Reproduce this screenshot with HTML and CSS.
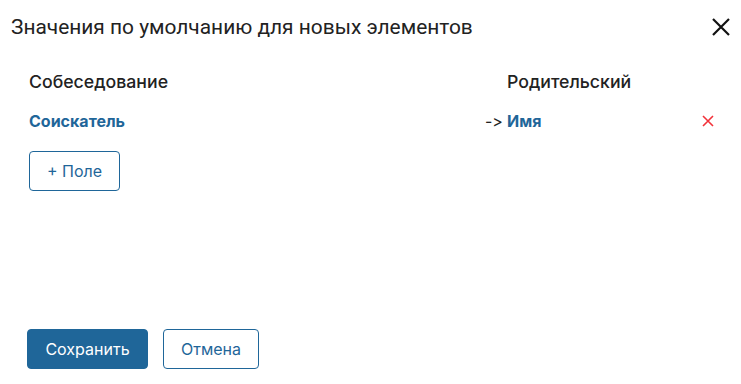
FILE: index.html
```html
<!DOCTYPE html>
<html lang="ru">
<head>
    <meta charset="UTF-8">
    <title>Значения по умолчанию</title>
    <link rel="stylesheet" href="styles.css">
</head>
<body>
    <div class="dialog">
        <div class="dialog-header">
            <div class="dialog-title">Значения по умолчанию для новых элементов</div>
            <button class="close-btn" aria-label="Закрыть">
                <svg width="20" height="20" viewBox="0 0 20 20"><path d="M2 2 L18 18 M18 2 L2 18" stroke="#111" stroke-width="2.2" fill="none"/></svg>
            </button>
        </div>

        <div class="dialog-body">
            <div class="map-row map-head">
                <div class="col-left">Собеседование</div>
                <div class="col-arrow"></div>
                <div class="col-right">Родительский</div>
                <div class="col-del"></div>
            </div>
            <div class="map-row map-item">
                <div class="col-left"><a class="field-link">Соискатель</a></div>
                <div class="col-arrow">-&gt;</div>
                <div class="col-right"><a class="field-link">Имя</a></div>
                <div class="col-del">
                    <svg width="12" height="12" viewBox="0 0 12 12"><path d="M1 1 L11 11 M11 1 L1 11" stroke="#f2323a" stroke-width="1.6" fill="none"/></svg>
                </div>
            </div>
            <button class="btn btn-outline add-btn">+ Поле</button>
        </div>

        <div class="dialog-footer">
            <button class="btn btn-primary">Сохранить</button>
            <button class="btn btn-outline">Отмена</button>
        </div>
    </div>
</body>
</html>
```

FILE: styles.css
```css
body {
    margin: 0;
    font-family: Inter, "Liberation Sans", Arial, sans-serif;
    font-feature-settings: "calt" 0;
    background: #fff;
    color: #222;
}

.dialog {
    width: 741px;
    height: 384px;
    display: flex;
    flex-direction: column;
    box-sizing: border-box;
}

.dialog-header {
    display: flex;
    justify-content: space-between;
    align-items: center;
    padding: 13px 10px 0 11px;
    height: 27px;
}

.dialog-title {
    font-family: Roboto, "Liberation Sans", Arial, sans-serif;
    font-size: 20.9px;
    color: #222;
}

.close-btn {
    border: none;
    background: none;
    padding: 0;
    width: 20px;
    height: 20px;
    cursor: pointer;
}

.dialog-body {
    padding: 32px 0 0 29px;
    flex: 1;
}

.map-row {
    display: flex;
    align-items: center;
    font-size: 16px;
}

.map-head {
    height: 18px;
    font-size: 17.7px;
    font-weight: 500;
}

.map-item {
    height: 18px;
    margin-top: 22px;
}

.col-left {
    width: 456px;
}

.col-arrow {
    width: 22px;
    color: #222;
}

.col-right {
    width: 195px;
}

.col-del {
    width: 14px;
    display: flex;
    align-items: center;
}

.field-link {
    color: #1f6699;
    font-weight: 700;
    cursor: pointer;
}

.btn {
    font-family: Inter, "Liberation Sans", Arial, sans-serif;
    font-size: 16px;
    height: 40px;
    border-radius: 4px;
    cursor: pointer;
    box-sizing: border-box;
}

.btn-outline {
    background: #fff;
    border: 1px solid #1f6699;
    color: #1f6699;
    padding: 0 17px;
}

.btn-primary {
    background: #1f6699;
    border: 1px solid #1f6699;
    color: #fff;
    width: 121px;
    padding: 0;
}

.add-btn {
    margin-top: 21px;
    width: 91px;
    padding: 0;
}

.dialog-footer {
    display: flex;
    gap: 15px;
    padding: 0 0 15px 27px;
}
```
